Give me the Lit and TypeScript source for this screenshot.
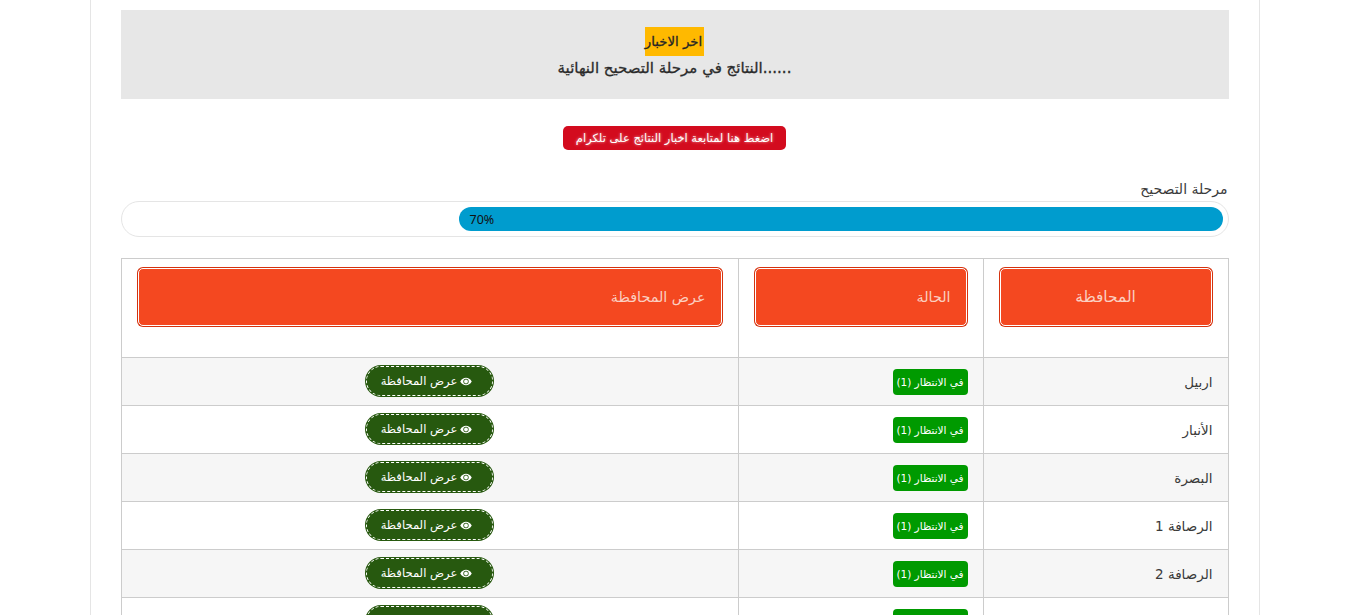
import { LitElement, html, css, svg } from "lit";
import { customElement } from "lit/decorators.js";

const rows = ["اربيل", "الأنبار", "البصرة", "الرصافة 1", "الرصافة 2", "الكرخ 1"];

const eye = svg`<svg class="eye" viewBox="0 0 14 10" width="12" height="9" aria-hidden="true">
  <path fill="#fff" d="M0.3 5C2 2 4.3 0.6 7 0.6S12 2 13.7 5C12 8 9.7 9.4 7 9.4S2 8 0.3 5Z"/>
  <circle cx="7" cy="5" r="3.1" fill="#27590f"/>
  <circle cx="7" cy="5" r="2.2" fill="#fff"/>
</svg>`;

@customElement("app-root")
export class AppRoot extends LitElement {
  static styles = css`
    :host {
      display: block;
      height: 615px;
      overflow: hidden;
      background: #fff;
      font-family: "DejaVu Sans", "Noto Sans", sans-serif;
      color: #333;
    }
    .container {
      box-sizing: border-box;
      width: 1170px;
      margin: 0 auto;
      padding: 10px 30px 0;
      border-left: 1px solid #e5e5e5;
      border-right: 1px solid #e5e5e5;
    }
    .news {
      height: 89px;
      box-sizing: border-box;
      padding-top: 17px;
      background: #e7e7e7;
      text-align: center;
      font-size: 15px;
      color: #2b2b2b;
      -webkit-text-stroke: 0.3px #2b2b2b;
    }
    .news .hl {
      display: inline-block;
      height: 29px;
      width: 59px;
      line-height: 29px;
      background: #ffb900;
      color: #222;
      white-space: nowrap;
    }
    .news .hl span {
      display: block;
      margin-left: -2px;
      font-size: 13.3px;
    }
    .news .line {
      height: 26px;
      line-height: 24px;
    }
    .cta-wrap {
      display: flex;
      justify-content: center;
      padding-top: 27px;
    }
    .cta {
      box-sizing: border-box;
      width: 223px;
      height: 24px;
      line-height: 25px;
      border-radius: 5px;
      background: #d30b1e;
      color: #fff;
      font-size: 11.5px;
      text-align: center;
      text-shadow: 0 0 3px rgba(255, 255, 255, 0.7);
      white-space: nowrap;
    }
    .label {
      margin-top: 28px;
      height: 23px;
      line-height: 22px;
      padding-right: 1px;
      text-align: right;
      font-size: 14px;
      color: #3a3a3a;
    }
    .progress {
      box-sizing: border-box;
      height: 36px;
      padding: 5px;
      border: 1px solid #e5e5e5;
      border-radius: 18px;
      background: #fff;
      display: flex;
      justify-content: flex-end;
    }
    .bar {
      box-sizing: border-box;
      height: 24px;
      line-height: 25px;
      padding-left: 11px;
      border-radius: 12px;
      background: #009cce;
      font-size: 12.5px;
      font-family: "Noto Sans", sans-serif;
      color: #111;
    }
    table {
      width: 100%;
      margin-top: 21px;
      border-collapse: collapse;
      table-layout: fixed;
      direction: rtl;
      font-size: 13.5px;
    }
    td, th {
      border: 1px solid #ccc;
      padding: 0 15px;
      font-weight: 400;
      vertical-align: middle;
    }
    th {
      box-sizing: border-box;
      height: 99px;
      vertical-align: top;
      padding-top: 8px;
    }
    tbody tr { height: 48px; }
    tbody tr:nth-child(odd) { background: #f6f6f6; }
    .c1 { width: 245px; }
    .c2 { width: 245px; }
    .head {
      box-sizing: border-box;
      height: 58px;
      line-height: 56px;
      padding-right: 15px;
      border: 1px solid #fff;
      border-radius: 5px;
      background: #f44820;
      box-shadow: 0 0 0 1px #d5330f;
      margin: 1px;
      color: #fbd0c2;
      font-size: 14.3px;
      text-align: right;
    }
    .head.center {
      padding-right: 0;
      text-align: center;
      font-size: 15.4px;
    }
    .name {
      text-align: right;
      padding-right: 15px;
      color: #3a3a3a;
    }
    .badge {
      display: block;
      box-sizing: border-box;
      width: 75px;
      height: 26px;
      line-height: 27px;
      border-radius: 4px;
      background: #009a00;
      color: #fff;
      font-size: 10.5px;
      text-align: center;
      white-space: nowrap;
    }
    .action {
      padding-bottom: 1px;
    }
    .view {
      display: flex;
      align-items: center;
      justify-content: center;
      gap: 3px;
      box-sizing: border-box;
      width: 129px;
      height: 32px;
      margin: 0 auto;
      padding-right: 6px;
      border-radius: 16px;
      background: #27590f;
      outline: 1px dashed #fff;
      outline-offset: -2px;
      color: #fff;
      font-size: 11.6px;
      white-space: nowrap;
    }
    .eye { flex: none; }
  `;

  render() {
    return html`
      <div class="container">
        <div class="news">
          <span class="hl"><span>اخر الاخبار</span></span>
          <div class="line">النتائج في مرحلة التصحيح النهائية......</div>
        </div>
        <div class="cta-wrap">
          <div class="cta">اضغط هنا لمتابعة اخبار النتائج على تلكرام</div>
        </div>
        <div class="label">مرحلة التصحيح</div>
        <div class="progress">
          <div class="bar" style="width: 764px">70%</div>
        </div>
        <table>
          <colgroup><col class="c1" /><col class="c2" /><col /></colgroup>
          <thead>
            <tr>
              <th><div class="head center">المحافظة</div></th>
              <th><div class="head">الحالة</div></th>
              <th><div class="head">عرض المحافظة</div></th>
            </tr>
          </thead>
          <tbody>
            ${rows.map(
              (r) => html`<tr>
                <td class="name">${r}</td>
                <td><span class="badge">في الانتظار (1)</span></td>
                <td class="action"><span class="view">${eye}<span>عرض المحافظة</span></span></td>
              </tr>`
            )}
          </tbody>
        </table>
      </div>
    `;
  }
}
